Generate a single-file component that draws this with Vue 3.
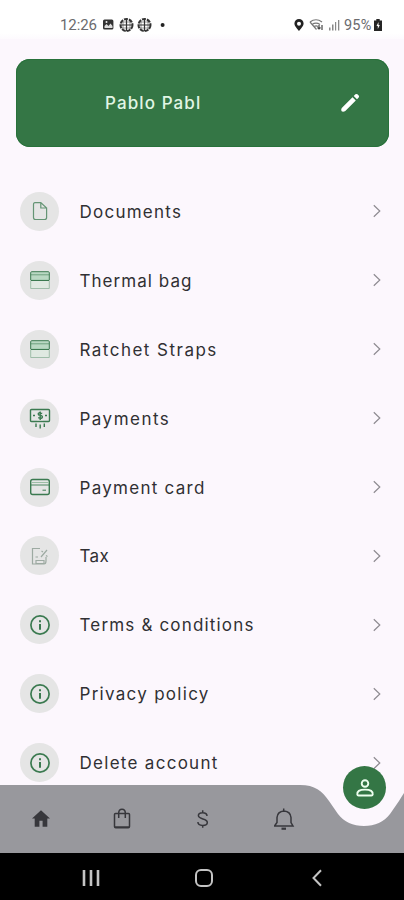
<script setup>
import { onMounted, ref } from 'vue'

const rows = [
  { label: 'Documents', icon: 'doc', width: 102 },
  { label: 'Thermal bag', icon: 'box', width: 112.5 },
  { label: 'Ratchet Straps', icon: 'box', width: 137.5 },
  { label: 'Payments', icon: 'cash', width: 90 },
  { label: 'Payment card', icon: 'card', width: 125.5 },
  { label: 'Tax', icon: 'tax', width: 29.5 },
  { label: 'Terms & conditions', icon: 'info', width: 174.5 },
  { label: 'Privacy policy', icon: 'info', width: 129.5 },
  { label: 'Delete account', icon: 'info', width: 138.5 },
]

// Letter spacing that makes each label fill its own measure.
const labels = ref([])
const tracking = ref(rows.map(() => 1))
onMounted(() => {
  tracking.value = rows.map((row, i) => {
    const n = row.label.length
    const natural = labels.value[i].getBoundingClientRect().width - n
    return (row.width - natural) / (n - 0.5)
  })
})
</script>

<template>
  <div class="screen">
    <header class="status">
      <span class="time">12:26</span>
      <svg class="left-icons" width="66" height="16" viewBox="0 0 66 16">
        <rect x="1" y="2.6" width="10.4" height="10" rx="1.5" fill="#333" />
        <path d="M2.5 11V9l2-2 2 2 2-2.500 2 2.500v2z" fill="#ddd" />
        <circle cx="4.500" cy="5" r="1" fill="#eee" />
        <g fill="none" stroke="#333" stroke-width="1.200">
          <g id="globe">
            <circle cx="24.500" cy="8" r="6" stroke-width="2" stroke-dasharray="4 1" />
            <path d="M24.500 2v12M18.500 8h12" />
            <path d="M21 4v8M28 4v8M20 5h9M20 11h9" stroke-width=".5" />
          </g>
          <use href="#globe" x="18" />
        </g>
        <circle cx="60.600" cy="8" r="2" fill="#222" />
      </svg>
      <svg class="right-icons" width="50" height="16" viewBox="0 0 50 16">
        <path fill-rule="evenodd" fill="#222" d="M6 2a4.600 4.600 0 0 0-4.600 4.600C1.400 9.500 6 14 6 14s4.600-4.500 4.600-7.400A4.600 4.600 0 0 0 6 2zm0 2.800a2 2 0 1 1 0 4 2 2 0 0 1 0-4z" />
        <g fill="none" stroke="#777" stroke-width="1.200">
          <path d="M17 5c4-3 8-3 12 0M19 7.400c3-2 5-2 8 0M21 9.600c1.500-1 3-1 4 0M17 5l6.500 7.500" />
          <path d="M26 12V8m-1.500 2.500L26 12l1.500-1.500M29 8v5" stroke="#444" />
        </g>
        <g fill="#888"><rect x="36" y="10.500" width="1.500" height="3" /><rect x="39" y="7.500" width="1.500" height="6" /><rect x="42" y="5" width="1.200" height="8.500" /><rect x="45" y="3" width="1.300" height="10.500" /></g>
      </svg>
      <span class="percent">95%</span>
      <svg class="battery" width="8" height="14" viewBox="0 0 8 14">
        <path d="M2.300 1h3.400v1.500H8V13H0V2.500h2.300z" fill="#252525" />
        <path d="M4.500 4L2.500 8h1.300v3l2-4H4.500z" fill="#fff" />
      </svg>
    </header>

    <section class="profile">
      <span class="name">Pablo Pabl</span>
      <svg class="pencil" width="24" height="24" viewBox="0 0 24 24">
        <path d="M4 16.700L14.500 6.200l3.300 3.300L7.300 20q-1 .8-2.300.8-1.800 0-1.800-1.800 0-1.300.8-2.300zM15.700 5l1.700-1.700q1-.8 2 0l1.300 1.300q.8 1 0 2L19 8.300z" fill="#fff" />
      </svg>
    </section>

    <main class="menu">
      <div v-for="(row, i) in rows" :key="row.label" class="row">
        <span class="disc">
          <svg width="24" height="24" viewBox="0 0 24 24" :class="['glyph', row.icon]">
            <template v-if="row.icon === 'doc'">
              <path d="M7 3.600h5.800L18.600 9v9.500q0 2-2 2H7.500q-2 0-2-2V5.600q0-2 1.500-2zM12.800 3.800V9h5.600" />
            </template>
            <template v-else-if="row.icon === 'box'">
              <rect x="2.700" y="4" width="18.600" height="8" fill="#b9d8c3" stroke="none" />
              <path d="M2.700 12V4.700q0-1 1-1h16.600q1 0 1 1V12" />
              <path d="M2.700 6.800h18.600" stroke-width=".6" />
              <path d="M2.700 12.500h18.600" stroke-width="1.200" />
              <path d="M2.700 13v7.500h18.600V13" stroke="#8eb39a" stroke-width=".8" fill="#dfe9e1" />
            </template>
            <template v-else-if="row.icon === 'cash'">
              <path d="M9 15.500H3.500q-1 0-1-1v-10q0-1 1-1h17q1 0 1 1v10q0 1-1 1H15" />
              <path d="M9 15.500h6" />
              <path d="M14.200 7.500q-4-1.500-4 .5 0 1.300 2 1.400 2.200.2 2.200 1.700 0 2-4.200.6M12.200 5.500v8.500M5 9.500h2M17 9.500h2M8 17.500V21M12.200 18.500v4M16.300 17.500V21" />
            </template>
            <template v-else-if="row.icon === 'card'">
              <rect x="2.700" y="4.500" width="18.600" height="15" rx="2" />
              <path d="M3 7.500h18" stroke="#9dbda6" stroke-width="1" />
              <path d="M3 10h18" stroke-width=".9" />
              <path d="M14.500 15.200h3.500" stroke-width="1" />
            </template>
            <template v-else-if="row.icon === 'tax'">
              <path d="M12 4.500H4.500v15.500H16q2 0 2-3v-4" />
              <path d="M8 16.500h8v3H8zM7.500 13h2.500M13 13l6-7M13.500 7l1.500 1M18 11.500l1.500 1" />
            </template>
            <template v-else>
              <circle cx="12" cy="12" r="9.100" stroke-width="1.700" />
              <path d="M12 11v5.800M12 7.200v2" stroke-width="2" />
            </template>
          </svg>
        </span>
        <span class="label"><span ref="labels" :style="{ letterSpacing: tracking[i] + 'px' }">{{ row.label }}</span></span>
        <svg class="chevron" width="10" height="14" viewBox="0 0 10 14">
          <path d="M1.800 1.200l6 5.800-6 5.800" />
        </svg>
      </div>
    </main>

    <nav class="tabs">
      <svg class="bar" width="404" height="68" viewBox="0 0 404 68">
        <path d="M0 0H300C315 0 322 6 329 16L338 29C344 37 353 41 364 41S384 37 390 29L399 16Q402 11 404 8V68H0z" fill="#98989d" />
      </svg>
      <div class="tab-icons">
        <svg class="tab" width="24" height="24" viewBox="0 0 24 24"><path d="M12 3.300l9 8.200h-2.700v8.300h-4.700v-6h-3.200v6H5.700v-8.300H3z" fill="#37373c" /></svg>
        <svg class="tab line" width="24" height="24" viewBox="0 0 24 24"><path d="M5.500 6.500h13q1 0 1 1v12q0 1.300-1.200 1.300H5.700q-1.200 0-1.200-1.300v-12q0-1 1-1zM8.700 11V6q0-3.800 3.300-3.800T15.300 6v5M4.700 20h14.600" /></svg>
        <svg class="tab line" width="24" height="24" viewBox="0 0 24 24"><path d="M16 9c0-2-1.700-3.300-4.400-3.300S7.400 6.900 7.400 8.600c0 4.200 8.900 2.600 8.900 6.800 0 1.900-1.800 3-4.600 3-3 0-4.800-1.200-4.800-3.300M11.700 3.300v2.400M11.700 18.400v2.400" /></svg>
        <svg class="tab line" width="24" height="24" viewBox="0 0 24 24"><path d="M2 19h19L19 15.500V10.500q-.5-6-7-6.500-6.500.5-7 6.500v5L2.500 19M11.700 1.500V4" /><path d="M9.500 21.700h4.500" stroke-width="2.200" /></svg>
      </div>
      <div class="active">
        <svg width="24" height="24" viewBox="0 0 24 24"><circle cx="12" cy="7.500" r="3.300" /><path d="M4.300 18.600q-.8-5 7.700-5t7.700 5q-.2.900-1.200.9h-13q-1 0-1.200-.9z" /></svg>
      </div>
    </nav>

    <footer class="system">
      <svg width="24" height="24" viewBox="0 0 24 24"><path d="M5 4v16M12 4v16M19 4v16" stroke-width="2.600" /></svg>
      <svg width="24" height="24" viewBox="0 0 24 24"><rect x="4" y="4" width="16" height="16" rx="5" /></svg>
      <svg width="24" height="24" viewBox="0 0 24 24"><path d="M16 4.200L8.500 12l7.500 7.800" /></svg>
    </footer>
  </div>
</template>

<style>
body { margin: 0; }
</style>

<style scoped>
.screen {
  width: 404px;
  height: 900px;
  display: flex;
  flex-direction: column;
  overflow: hidden;
  background: #fcf7fd;
  font-family: Inter, Roboto, "Liberation Sans", sans-serif;
}
.status {
  flex: none;
  height: 39px;
  box-sizing: border-box;
  padding: 11px 20px 0 60px;
  display: flex;
  align-items: center;
  background: linear-gradient(#fff 85%, #fdfafe);
  color: #6b6b6e;
  font-family: Roboto, sans-serif;
  font-size: 15px;
}
.time { width: 42px; letter-spacing: -0.1px; }
.right-icons { margin-left: 125px; }
.percent { margin-left: 1px; width: 29px; font-size: 14.5px; letter-spacing: 0.2px; }
.battery { margin-left: 1px; }
.profile {
  flex: none;
  height: 88px;
  margin: 20px 15px 0 16px;
  padding: 0 27px 0 89px;
  box-sizing: border-box;
  display: flex;
  align-items: center;
  justify-content: space-between;
  border-radius: 14px;
  background: #347645;
  box-shadow: inset 0 0 0 1px #28713b;
}
.name { color: #e1f5e4; font-size: 17px; font-weight: 500; letter-spacing: 1.1px; }
.menu {
  flex: none;
  height: 638px;
  padding: 30px 20px 0;
  box-sizing: border-box;
  overflow: hidden;
}
.row { height: 68.9px; display: flex; align-items: center; }
.disc {
  width: 39px;
  height: 39px;
  border-radius: 50%;
  background: #e5e5e5;
  display: grid;
  place-items: center;
}
.glyph { fill: none; stroke: #3b7a50; stroke-width: 1.4; }
.glyph.doc { stroke: #659575; stroke-width: 1.2; }
.glyph.tax { stroke: #9daaa2; stroke-width: 1.2; }
.glyph.box { stroke-width: 1; }
.label { margin-left: 20.5px; flex: 1; padding-top: 1px; color: #303033; font-size: 17px; white-space: nowrap; }
.chevron { margin-right: 2px; fill: none; stroke: #8e8b91; stroke-width: 1.2; }
.tabs { position: relative; flex: none; height: 68px; }
.bar { display: block; position: absolute; left: 0; top: 0; }
.tab-icons { position: relative; height: 68px; display: flex; align-items: center; gap: 57px; padding-left: 29px; }
.tab.line { fill: none; stroke: #37373c; stroke-width: 1.5; }
.active {
  position: absolute;
  left: 343px;
  top: -19px;
  width: 43px;
  height: 43px;
  border-radius: 50%;
  background: #347645;
  display: grid;
  place-items: center;
}
.active svg { fill: none; stroke: #edffef; stroke-width: 1.9; }
.system { flex: 1; background: #000; display: flex; align-items: center; padding: 2px 0 0 79px; gap: 89px; }
.system svg { fill: none; stroke: #c4c4c4; stroke-width: 2; }
</style>
